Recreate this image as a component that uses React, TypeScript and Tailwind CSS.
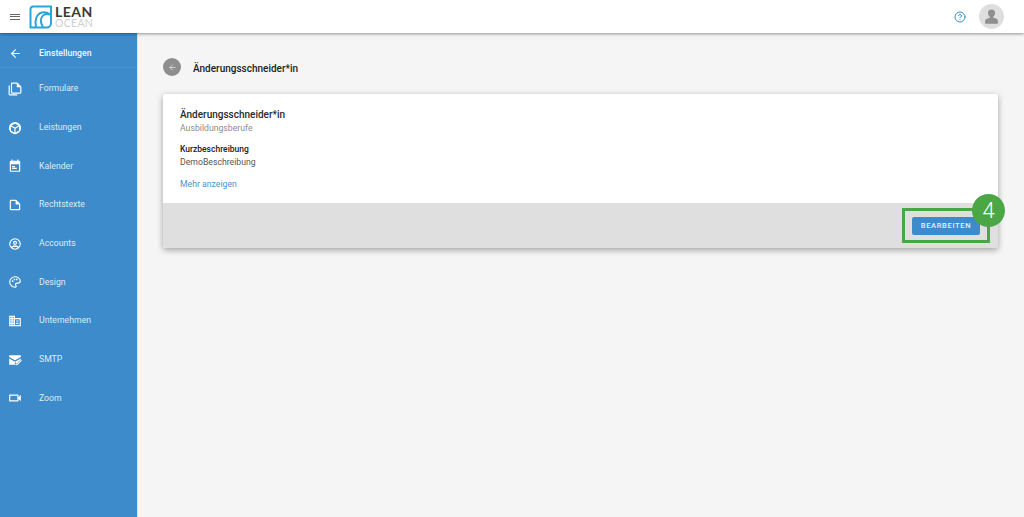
import React from 'react';
import { ArrowLeft, CircleHelp } from 'lucide-react';

const Icon = ({ d }: { d: string }) => (
  <svg viewBox="0 0 24 24" className="w-[14px] h-[14px] fill-white shrink-0" aria-hidden="true">
    <path d={d} fillRule="evenodd" />
  </svg>
);

const navItems = [
  { label: 'Formulare', d: 'M7 1h9l7 7v10a2 2 0 0 1-2 2H7a2 2 0 0 1-2-2V3a2 2 0 0 1 2-2zm0 2v15h14V9h-6V3H7zM1 6h2v15h13v2H3a2 2 0 0 1-2-2V6z' },
  { label: 'Leistungen', d: 'M12 1.500a10.500 10.500 0 1 1 0 21 10.500 10.500 0 0 1 0-21zm0 3L6 7.800l6 3.300 6-3.300-6-3.300zM5 9.500v6.700l6 3.300v-6.700L5 9.500zm14 0-6 3.300v6.700l6-3.300V9.500z' },
  { label: 'Kalender', d: 'M6 1h2v2h8V1h2v2h1a2 2 0 0 1 2 2v15a2 2 0 0 1-2 2H5a2 2 0 0 1-2-2V5a2 2 0 0 1 2-2h1V1zM5 9v11h14V9H5zm2 3h5v2H7v-2zm0 3h8v2H7v-2z' },
  { label: 'Rechtstexte', d: 'M14 3H5a2 2 0 0 0-2 2v14c0 1.100.9 2 2 2h14a2 2 0 0 0 2-2v-9l-7-7zm5 16H5V5h8v6h6v8z' },
  { label: 'Accounts', d: 'M12 2a10 10 0 1 1 0 20 10 10 0 0 1 0-20zm0 2a8 8 0 0 0-6.300 12.900C7.200 15.300 9.500 14.500 12 14.500s4.800.8 6.300 2.400A8 8 0 0 0 12 4zm0 2.500a3.500 3.500 0 1 1 0 7 3.500 3.500 0 0 1 0-7zm0 2a1.500 1.500 0 1 0 0 3 1.500 1.500 0 0 0 0-3zm0 8c-1.800 0-3.500.5-4.800 1.700A8 8 0 0 0 12 20a8 8 0 0 0 4.800-1.800c-1.300-1.200-3-1.700-4.800-1.700z' },
  { label: 'Design', d: 'M12 2c5.500 0 10 3.800 10 8.300a5 5 0 0 1-5 4.700h-1.700c-.8 0-1.500.5-1.500 1.300 0 .4.200.7.500 1.100.4.500.7 1.100.7 1.800 0 1.500-1.300 2.800-3 2.800a10 10 0 0 1 0-20zm0 2a8 8 0 0 0 0 16c.6 0 1-.4 1-.8 0-.2-.1-.3-.3-.6-.5-.6-.9-1.300-.9-2.300 0-1.900 1.500-3.300 3.500-3.300H17c1.700 0 3-1.300 3-3 0-3.100-3.600-6-8-6zM8 9a1.500 1.500 0 1 1 0 3 1.500 1.500 0 0 1 0-3zm3-3a1.500 1.500 0 1 1 0 3 1.500 1.500 0 0 1 0-3zm4 0a1.500 1.500 0 1 1 0 3 1.500 1.500 0 0 1 0-3z' },
  { label: 'Unternehmen', d: 'M12 7V3H2v18h20V7H12zM6 19H4v-2h2v2zm0-4H4v-2h2v2zm0-4H4V9h2v2zm0-4H4V5h2v2zm4 12H8v-2h2v2zm0-4H8v-2h2v2zm0-4H8V9h2v2zm0-4H8V5h2v2zm10 12h-8V9h8v10zm-2-8h-4v2h4v-2zm0 4h-4v2h4v-2z' },
  { label: 'SMTP', d: 'M2 4h20v3l-10 5.500L2 7V4zm0 5.500 10 5.500 10-5.500V11l-9 9H2V9.500zM22.500 11.500l1.300 1.300-8.300 8.700-4.300-4.300 1.300-1.300 3 3 7-7.400z' },
  { label: 'Zoom', d: 'M18 7a1 1 0 0 0-1-1H3a1 1 0 0 0-1 1v10a1 1 0 0 0 1 1h14a1 1 0 0 0 1-1v-3.500l4 4v-11l-4 4V7zm-2 9H4V8h12v8z' },
];

export default function App() {
  return (
    <div className="h-[517px] w-[1024px] overflow-hidden flex flex-col bg-[#f5f5f5] font-['Roboto',sans-serif]">
      <header className="h-[33px] shrink-0 bg-white flex items-center shadow-[0_1px_3px_rgba(0,0,0,0.4)] z-10 pl-[10px] pr-[20px]">
        <div className="w-[10px] h-[6px] flex flex-col justify-between shrink-0">
          <span className="h-px bg-[#666]" />
          <span className="h-px bg-[#666]" />
          <span className="h-px bg-[#666]" />
        </div>
        <svg viewBox="0 0 24 24" className="w-[24px] h-[24px] ml-[9px] shrink-0" aria-hidden="true">
          <path d="M4 1.500h18V18a4.500 4.500 0 0 1-4.500 4.500H1.500V4A2.500 2.500 0 0 1 4 1.500z" fill="none" stroke="#2ba4dc" strokeWidth="2" />
          <path d="M7 22c-1.500-6 0-13 6-14.500 3-.7 6 0 8 2-3-1-6-.5-7.500 1.500-2 2.500-2 7 .5 11" fill="none" stroke="#2ba4dc" strokeWidth="2" />
        </svg>
        <div className="ml-[2px] flex flex-col font-['Lato',sans-serif]">
          <span className="text-[14px] font-bold tracking-[0.5px] text-[#3a3a3a] leading-[12px]">LEAN</span>
          <span className="text-[10.500px] tracking-[0.3px] text-[#d0d0d0] leading-[10px]">OCEAN</span>
        </div>
        <CircleHelp className="ml-auto w-[12px] h-[12px] text-[#2f8fd8]" />
        <div className="ml-[13px] w-[25px] h-[25px] rounded-full bg-[#dedede] flex items-center justify-center overflow-hidden">
          <svg viewBox="0 0 24 24" className="w-[19px] h-[19px] fill-[#8f8f8f]" aria-hidden="true">
            <path d="M12 3a4.500 4.500 0 0 1 4.500 4.500c0 2-1 3.600-2.200 4.500v1.500c3.500.4 5.700 1.800 5.700 3.500V21H4v-3.500c0-1.700 2.200-3.100 5.700-3.500V12C8.500 11.100 7.500 9.500 7.500 7.500A4.500 4.500 0 0 1 12 3z" />
          </svg>
        </div>
      </header>
      <div className="flex flex-1 min-h-0">
        <aside className="w-[137px] shrink-0 bg-[#3d8bcb] text-white border-r border-[#e3e3e3] box-content">
          <div className="h-[35px] flex items-center pl-[9px] pt-[7px] border-b border-[#4a93cf]">
            <ArrowLeft className="w-[13px] h-[13px] text-white" />
            <span className="ml-[17px] text-[8.700px] font-medium text-[#f0f6fb]">Einstellungen</span>
          </div>
          <nav className="flex flex-col pt-[1.500px]">
            {navItems.map((item) => (
              <div key={item.label} className="h-[38.7px] flex items-center pl-[8px]">
                <Icon d={item.d} />
                <span className="ml-[17px] text-[8.700px] text-[#dcebf6]">{item.label}</span>
              </div>
            ))}
          </nav>
        </aside>
        <main className="flex-1 min-w-0 pl-[25px] pr-[25px] pt-[25px]">
          <div className="flex items-center h-[18px]">
            <div className="w-[18px] h-[18px] rounded-full bg-[#8e8e8e] flex items-center justify-center">
              <ArrowLeft className="w-[9px] h-[9px] text-[#e6e6e6]" />
            </div>
            <h1 className="ml-[12px] mt-[2px] text-[10px] font-medium text-[#222]">Änderungsschneider*in</h1>
          </div>
          <section className="relative mt-[18px] w-[835px] bg-white rounded-[2px] shadow-[0_2px_6px_rgba(0,0,0,0.35)]">
            <div className="h-[109px] pl-[17px] pt-[14px]">
              <h2 className="text-[10px] leading-[13px] font-medium text-[#2a2a2a]">Änderungsschneider*in</h2>
              <p className="text-[8.700px] leading-[14px] text-[#8c8c8c]">Ausbildungsberufe</p>
              <p className="mt-[8px] text-[8.500px] leading-[12px] font-medium text-[#222]">Kurzbeschreibung</p>
              <p className="mt-[1px] text-[8.700px] leading-[12px] text-[#555]">DemoBeschreibung</p>
              <a className="block mt-[10px] text-[8.700px] leading-[12px] text-[#4a94cf]">Mehr anzeigen</a>
            </div>
            <div className="h-[45px] bg-[#dfdfdf] rounded-b-[2px] flex items-center justify-end pr-[18px]">
              <button className="h-[18px] w-[68px] rounded-[2px] bg-[#3d8bcb] text-[#e6f0f8] text-[7.500px] font-medium tracking-[0.65px]">
                BEARBEITEN
              </button>
            </div>
            <div className="absolute left-[739px] top-[114px] w-[88px] h-[35px] border-[3px] border-[#4ba745]" />
            <div className="absolute left-[809px] top-[100px] w-[33px] h-[33px] rounded-full bg-[#4ba745] text-white text-[22px] font-light leading-[33px] text-center">
              4
            </div>
          </section>
        </main>
      </div>
    </div>
  );
}
